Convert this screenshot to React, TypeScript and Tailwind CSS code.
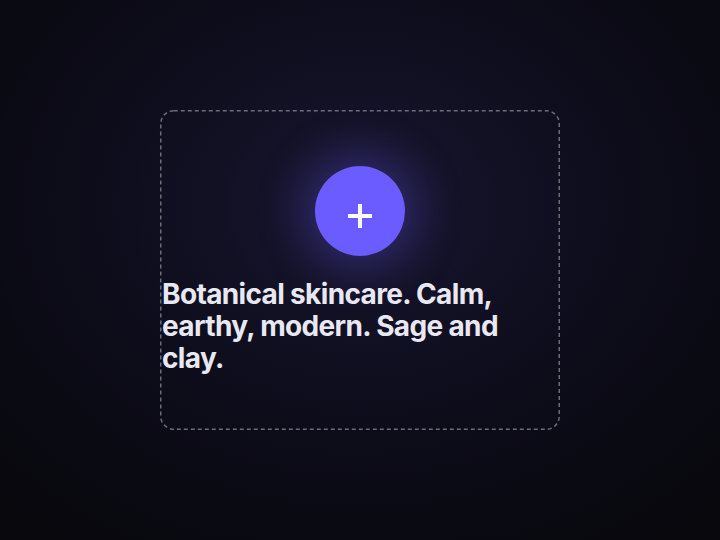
import React from "react";

export default function App() {
  return (
    <div
      className="w-[720px] h-[540px] flex items-center justify-center bg-[radial-gradient(ellipse_70%_75%_at_50%_38%,#18162f_0%,#0d0c1a_55%,#08080d_100%)]"
      style={{ fontFamily: "Inter, 'Noto Sans', sans-serif" }}
    >
      <div className="relative w-[400px] h-[320px] p-[2px] flex flex-col items-center justify-center gap-[22px]">
        <svg className="absolute inset-0 pointer-events-none" width="400" height="320" viewBox="0 0 400 320">
          <rect x="0.75" y="0.75" width="398.5" height="318.5" rx="13" ry="13" fill="none" stroke="#6c6c78" strokeWidth="1.5" strokeDasharray="4 3" />
        </svg>
        <div className="w-[90px] h-[90px] rounded-full bg-[#6b5cff] shadow-[0_0_48px_12px_rgba(107,92,255,0.33)] flex items-center justify-center">
          <svg width="26" height="26" viewBox="0 0 26 26" className="mt-[10px]">
            <path d="M13 1v24M1 13h24" stroke="white" strokeWidth="4" strokeLinecap="butt" />
          </svg>
        </div>
        <p className="w-full text-left text-[28px] leading-[32px] font-bold tracking-[-0.65px] text-[#e8e8f2]">
          Botanical skincare. Calm, earthy, modern. Sage and clay.
        </p>
      </div>
    </div>
  );
}
